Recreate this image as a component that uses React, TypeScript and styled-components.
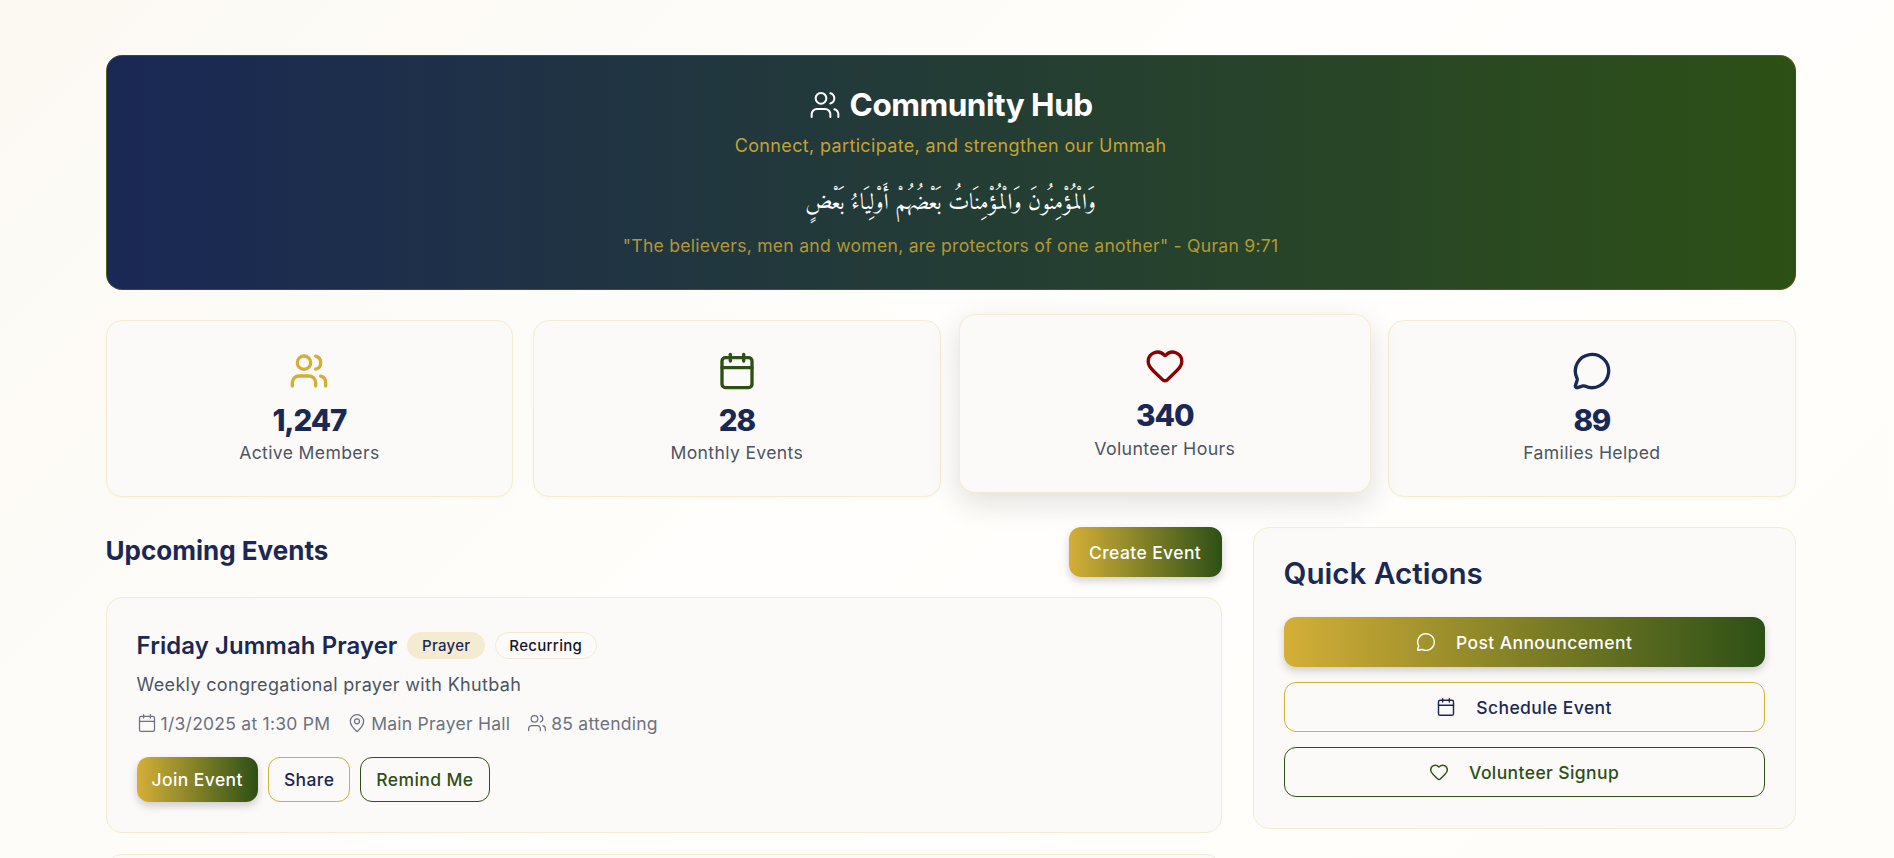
import React from "react";
import styled, { createGlobalStyle } from "styled-components";
import { Calendar, Heart, MapPin, MessageCircle, Users } from "lucide-react";

const GOLD = "#d4af37";
const GREEN = "#2d5016";
const NAVY = "#1a2855";
const RED = "#8b0000";
const FONT = `Inter, "Noto Sans", "Liberation Sans", sans-serif`;

const GlobalStyle = createGlobalStyle`
  html, body {
    margin: 0;
    height: 858px;
    overflow: hidden;
  }
  body {
    font-family: ${FONT};
    background: linear-gradient(135deg, #fcf9f3 0%, #fffefc 50%, #fffdf9 100%);
  }
  * { box-sizing: border-box; }
`;

const Page = styled.div`
  width: 1690px;
  margin-left: 105.6px;
  padding-top: 55px;
`;

const Hero = styled.header`
  height: 235px;
  border-radius: 16px;
  background: linear-gradient(90deg, ${NAVY}, ${GREEN});
  border: 1px solid rgba(212, 175, 55, 0.2);
  display: flex;
  flex-direction: column;
  align-items: center;
  padding-top: 25px;
`;

const HeroTitle = styled.h1`
  margin: 0;
  display: flex;
  align-items: center;
  gap: 9px;
  color: #fff;
  font-size: 31.5px;
  line-height: 48px;
  font-weight: 700;
  letter-spacing: -0.5px;
`;

const HeroSub = styled.p`
  margin: 4px 0 0;
  color: ${GOLD};
  font-size: 18px;
  line-height: 26px;
  letter-spacing: 0.35px;
  opacity: 0.9;
`;

const Arabic = styled.p`
  margin: 25px 0 0;
  color: #fff;
  font-family: "Amiri", "Liberation Serif", serif;
  font-size: 22.6px;
  line-height: 40px;
  direction: rtl;
`;

const Verse = styled.p`
  margin: 10px 0 0;
  color: ${GOLD};
  font-size: 17.6px;
  line-height: 24px;
  letter-spacing: 0.25px;
  opacity: 0.8;
`;

const StatGrid = styled.section`
  display: grid;
  grid-template-columns: repeat(4, 1fr);
  gap: 20px;
  margin-top: 30px;
`;

const StatCard = styled.div<{ $lifted?: boolean }>`
  height: 177px;
  display: flex;
  flex-direction: column;
  align-items: center;
  padding-top: 30px;
  background: #fcfaf8;
  border: 1px solid #f6ecd2;
  border-radius: 16px;
  box-shadow: ${(p) =>
    p.$lifted
      ? "0 10px 30px rgba(0, 0, 0, 0.12)"
      : "0 1px 3px rgba(212, 175, 55, 0.08)"};
  transform: ${(p) => (p.$lifted ? "translateY(-5px) scale(1.01)" : "none")};
`;

const StatValue = styled.div`
  margin-top: 6px;
  color: ${NAVY};
  font-size: 29.5px;
  line-height: 46px;
  font-weight: 800;
  letter-spacing: -1.1px;
`;

const StatLabel = styled.div`
  margin-top: -1px;
  color: #4b5563;
  font-size: 17.6px;
  line-height: 22px;
  letter-spacing: 0.35px;
`;

const MainGrid = styled.div`
  display: grid;
  grid-template-columns: 1116px minmax(0, 1fr);
  gap: 31px;
  margin-top: 30px;
`;

const SectionHead = styled.div`
  display: flex;
  justify-content: space-between;
  align-items: center;
  margin-bottom: 20px;
`;

const SectionTitle = styled.h2`
  margin: 0;
  padding-bottom: 3px;
  color: ${NAVY};
  font-size: 26px;
  font-weight: 700;
`;

const Button = styled.button<{ $variant: "primary" | "gold" | "green"; $wide?: boolean }>`
  display: flex;
  align-items: center;
  justify-content: center;
  gap: 20px;
  font-family: inherit;
  font-size: 17.5px;
  letter-spacing: 0.4px;
  font-weight: 500;
  border-radius: 12px;
  cursor: pointer;
  height: ${(p) => (p.$wide ? "50px" : "45px")};
  width: ${(p) => (p.$wide ? "100%" : "auto")};
  padding: 0 15px;
  background: ${(p) =>
    p.$variant === "primary"
      ? `linear-gradient(90deg, ${GOLD}, ${GREEN})`
      : "transparent"};
  color: ${(p) =>
    p.$variant === "primary" ? "#fff" : p.$variant === "gold" ? NAVY : GREEN};
  border: ${(p) =>
    p.$variant === "primary"
      ? "none"
      : `1px solid ${p.$variant === "gold" ? GOLD : GREEN}`};
  box-shadow: ${(p) =>
    p.$variant === "primary" ? "0 4px 8px rgba(0, 0, 0, 0.18)" : "none"};
`;

const CreateButton = styled(Button)`
  width: 153px;
  height: 50px;
`;

const EventList = styled.div`
  display: flex;
  flex-direction: column;
  gap: 21px;
`;

const Card = styled.div`
  background: #fcfaf8;
  border: 1px solid #f6ecd2;
  border-radius: 16px;
  padding: 30px;
`;

const EventCard = styled(Card)`
  height: 236px;
  padding-top: 33px;
`;

const EventHead = styled.div`
  display: flex;
  align-items: center;
  height: 28px;
  gap: 10px;
`;

const EventTitle = styled.h3`
  margin: 0;
  color: ${NAVY};
  font-size: 23.9px;
  letter-spacing: 0.1px;
  font-weight: 600;
`;

const Tag = styled.span<{ $filled?: boolean }>`
  display: flex;
  align-items: center;
  height: 27px;
  padding: 0 13.5px;
  border-radius: 14px;
  font-size: 15px;
  letter-spacing: 0.3px;
  font-weight: 500;
  color: ${(p) => (p.$filled ? NAVY : "#111827")};
  background: ${(p) => (p.$filled ? "#f5ebd0" : "#fdfbf9")};
  border: 1px solid ${(p) => (p.$filled ? "#f5ebd0" : "#f3ead6")};
`;

const EventDesc = styled.p`
  margin: 13px 0 0;
  color: #4b5563;
  font-size: 18px;
  letter-spacing: 0.33px;
  line-height: 26px;
`;

const Meta = styled.div`
  display: flex;
  align-items: center;
  gap: 17px;
  margin-top: 12px;
  height: 26px;
  color: #6b7280;
  font-size: 17.5px;
  letter-spacing: 0.25px;
`;

const MetaItem = styled.span`
  display: flex;
  align-items: center;
  gap: 4px;
`;

const ActionsRow = styled.div`
  display: flex;
  gap: 10px;
  margin-top: 21px;
`;

const QuickCard = styled(Card)`
  height: 302px;
  padding-top: 27px;
`;

const QuickTitle = styled.h2`
  margin: 0 0 26px;
  color: ${NAVY};
  font-size: 29.6px;
  line-height: 36px;
  font-weight: 600;
`;

const QuickList = styled.div`
  display: flex;
  flex-direction: column;
  gap: 15px;
`;

export default function App() {
  return (
    <>
      <GlobalStyle />
      <Page>
        <Hero>
          <HeroTitle>
            <Users size={32} strokeWidth={1.5} />
            Community Hub
          </HeroTitle>
          <HeroSub>Connect, participate, and strengthen our Ummah</HeroSub>
          <Arabic>وَالْمُؤْمِنُونَ وَالْمُؤْمِنَاتُ بَعْضُهُمْ أَوْلِيَاءُ بَعْضٍ</Arabic>
          <Verse>"The believers, men and women, are protectors of one another" - Quran 9:71</Verse>
        </Hero>

        <StatGrid>
          <StatCard>
            <Users size={40} color={GOLD} strokeWidth={2} />
            <StatValue>1,247</StatValue>
            <StatLabel>Active Members</StatLabel>
          </StatCard>
          <StatCard>
            <Calendar size={40} color={GREEN} strokeWidth={2} />
            <StatValue>28</StatValue>
            <StatLabel>Monthly Events</StatLabel>
          </StatCard>
          <StatCard $lifted>
            <Heart size={40} color={RED} strokeWidth={2} />
            <StatValue>340</StatValue>
            <StatLabel>Volunteer Hours</StatLabel>
          </StatCard>
          <StatCard>
            <MessageCircle size={40} color={NAVY} strokeWidth={2} />
            <StatValue>89</StatValue>
            <StatLabel>Families Helped</StatLabel>
          </StatCard>
        </StatGrid>

        <MainGrid>
          <div>
            <SectionHead>
              <SectionTitle>Upcoming Events</SectionTitle>
              <CreateButton $variant="primary">Create Event</CreateButton>
            </SectionHead>
            <EventList>
              <EventCard>
                <EventHead>
                  <EventTitle>Friday Jummah Prayer</EventTitle>
                  <Tag $filled>Prayer</Tag>
                  <Tag>Recurring</Tag>
                </EventHead>
                <EventDesc>Weekly congregational prayer with Khutbah</EventDesc>
                <Meta>
                  <MetaItem>
                    <Calendar size={20} strokeWidth={1.5} />
                    1/3/2025 at 1:30 PM
                  </MetaItem>
                  <MetaItem>
                    <MapPin size={20} strokeWidth={1.5} />
                    Main Prayer Hall
                  </MetaItem>
                  <MetaItem>
                    <Users size={20} strokeWidth={1.5} />
                    85 attending
                  </MetaItem>
                </Meta>
                <ActionsRow>
                  <Button $variant="primary">Join Event</Button>
                  <Button $variant="gold">Share</Button>
                  <Button $variant="green">Remind Me</Button>
                </ActionsRow>
              </EventCard>
              <EventCard />
            </EventList>
          </div>

          <div>
            <QuickCard>
              <QuickTitle>Quick Actions</QuickTitle>
              <QuickList>
                <Button $variant="primary" $wide>
                  <MessageCircle size={20} strokeWidth={1.75} />
                  Post Announcement
                </Button>
                <Button $variant="gold" $wide>
                  <Calendar size={20} strokeWidth={1.75} />
                  Schedule Event
                </Button>
                <Button $variant="green" $wide>
                  <Heart size={20} strokeWidth={1.75} />
                  Volunteer Signup
                </Button>
              </QuickList>
            </QuickCard>
          </div>
        </MainGrid>
      </Page>
    </>
  );
}
